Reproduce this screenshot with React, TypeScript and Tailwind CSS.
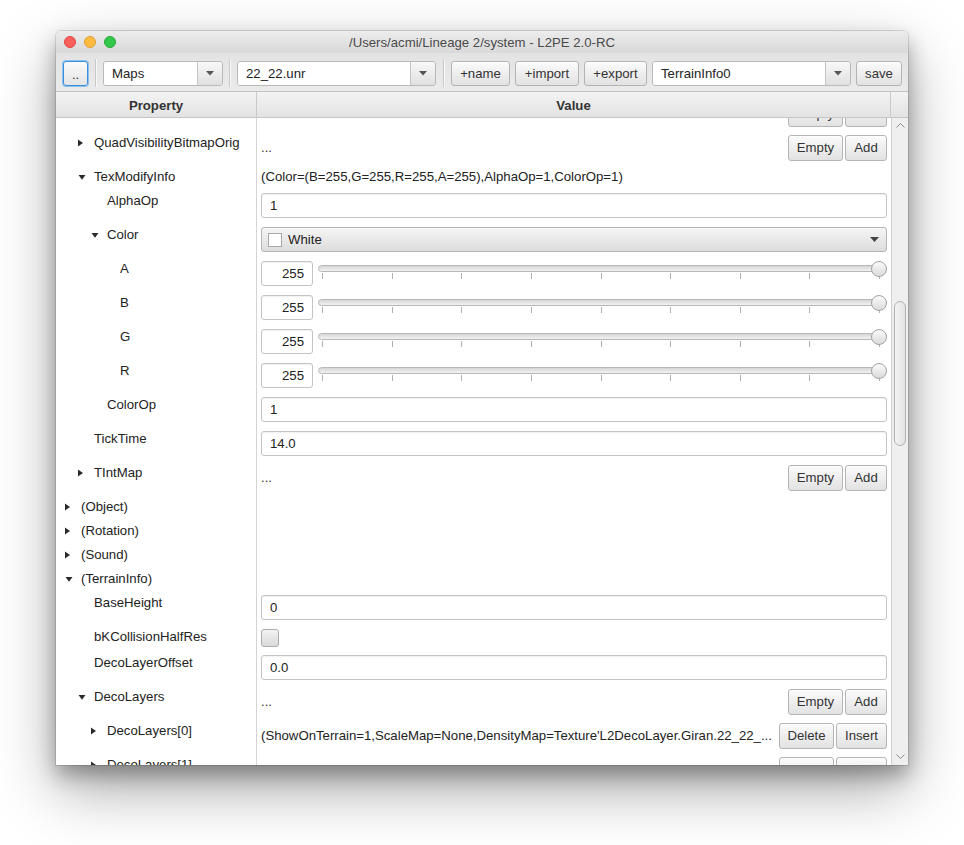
import React from 'react';

type Row = {
  label?: string;
  level: number;
  arrow?: 'right' | 'down';
  h: 24 | 26 | 34;
  value: React.ReactNode;
};

function RightTri() {
  return (
    <svg width="5" height="8" viewBox="0 0 5 8">
      <path d="M0 0.5L5 4L0 7.5Z" fill="#2a2a2a" />
    </svg>
  );
}
function DownTri() {
  return (
    <svg width="8" height="5" viewBox="0 0 8 5">
      <path d="M0.5 0H7.5L4 4.8Z" fill="#2a2a2a" />
    </svg>
  );
}

function Btn({ children, className = '' }: { children: React.ReactNode; className?: string }) {
  return (
    <div
      className={`flex items-center justify-center rounded-[3px] border border-[#b4b4b4] bg-gradient-to-b from-[#fbfbfb] to-[#e2e2e2] text-[13.2px] text-[#333] shadow-[inset_0_1px_0_rgba(255,255,255,0.9)] ${className}`}
    >
      {children}
    </div>
  );
}

function Combo({ text, className = '' }: { text: string; className?: string }) {
  return (
    <div className={`h-[25px] flex rounded-[3px] border border-[#b9b9b9] overflow-hidden ${className}`}>
      <div className="flex-1 bg-white flex items-center pl-[8px] text-[13.2px] text-[#222]">{text}</div>
      <div className="w-[25px] border-l border-[#c4c4c4] bg-gradient-to-b from-[#f8f8f8] to-[#e0e0e0] flex items-center justify-center">
        <svg width="8" height="5" viewBox="0 0 8 5">
          <path d="M0 0H8L4 4.5Z" fill="#555" />
        </svg>
      </div>
    </div>
  );
}

function Sep() {
  return <div className="w-[1px] h-[28px] -mt-[2px] bg-[#c9c9c9] shadow-[1px_0_0_#f7f7f7]" />;
}

function Dots() {
  return <span className="flex-1 text-[13.2px] text-[#333]">...</span>;
}

function EmptyAdd() {
  return (
    <div className="flex items-center h-full w-full">
      <Dots />
      <Btn className="h-[26px] w-[55px]">Empty</Btn>
      <Btn className="h-[26px] w-[42px] ml-[2px]">Add</Btn>
    </div>
  );
}

function Field({ text }: { text: string }) {
  return (
    <div className="mt-[4px] h-[25px] w-full rounded-[3px] border border-[#c4c4c4] bg-white shadow-[inset_0_1px_1px_rgba(0,0,0,0.06)] flex items-center pl-[8px] text-[13.2px] text-[#222]">
      {text}
    </div>
  );
}

function SliderRow() {
  const ticks = [0, 1, 2, 3, 4, 5, 6, 7, 8];
  return (
    <div className="mt-[4px] flex w-full">
      <div className="h-[25px] w-[52px] rounded-[3px] border border-[#c4c4c4] bg-white shadow-[inset_0_1px_1px_rgba(0,0,0,0.06)] flex items-center justify-end pr-[8px] text-[13.2px] text-[#222]">
        255
      </div>
      <div className="relative flex-1 ml-[5px] h-[25px]">
        <div className="mt-[4px] h-[7px] rounded-full border border-[#b8b8b8] bg-gradient-to-b from-[#d6d6d6] to-[#f2f2f2]" />
        <div className="mt-[1px] ml-[4px] w-[558px] flex justify-between">
          {ticks.map((t) => (
            <div key={t} className="w-[1px] h-[6px] bg-[#b0b0b0]" />
          ))}
        </div>
        <div className="absolute left-[553px] top-[0px] w-[16px] h-[16px] rounded-full border border-[#a4a4a4] bg-gradient-to-b from-[#fbfbfb] to-[#dadada]" />
      </div>
    </div>
  );
}

function ColorCombo() {
  return (
    <div className="mt-[4px] h-[25px] w-full rounded-[3px] border border-[#b4b4b4] bg-gradient-to-b from-[#f5f5f5] to-[#dddddd] flex items-center pl-[6px] pr-[7px] text-[13.2px] text-[#222]">
      <div className="w-[14px] h-[14px] bg-white border border-[#a8a8a8]" />
      <span className="ml-[6px] flex-1">White</span>
      <svg width="9" height="5" viewBox="0 0 9 5">
        <path d="M0 0H9L4.5 5Z" fill="#444" />
      </svg>
    </div>
  );
}

function CheckBox() {
  return (
    <div className="mt-[4px] w-[18px] h-[18px] rounded-[3px] border border-[#acacac] bg-gradient-to-b from-[#f3f3f3] to-[#d9d9d9]" />
  );
}

function TextVal({ text }: { text: string }) {
  return <div className="flex items-center h-full text-[13.2px] text-[#222] whitespace-nowrap">{text}</div>;
}

function LayerVal({ text, showText = true }: { text: string; showText?: boolean }) {
  return (
    <div className="flex items-center h-full w-full">
      <span className="flex-1 min-w-0 overflow-hidden whitespace-nowrap text-[13.2px] text-[#222]">{showText ? text : ''}</span>
      <Btn className="h-[26px] w-[55px] ml-[4px]">Delete</Btn>
      <Btn className="h-[26px] w-[51px] ml-[2px]">Insert</Btn>
    </div>
  );
}

const rows: Row[] = [
  { label: '', level: 1, h: 34, value: <EmptyAdd /> },
  { label: 'QuadVisibilityBitmapOrig', level: 1, arrow: 'right', h: 34, value: <EmptyAdd /> },
  {
    label: 'TexModifyInfo',
    level: 1,
    arrow: 'down',
    h: 24,
    value: <TextVal text="(Color=(B=255,G=255,R=255,A=255),AlphaOp=1,ColorOp=1)" />,
  },
  { label: 'AlphaOp', level: 2, h: 34, value: <Field text="1" /> },
  { label: 'Color', level: 2, arrow: 'down', h: 34, value: <ColorCombo /> },
  { label: 'A', level: 3, h: 34, value: <SliderRow /> },
  { label: 'B', level: 3, h: 34, value: <SliderRow /> },
  { label: 'G', level: 3, h: 34, value: <SliderRow /> },
  { label: 'R', level: 3, h: 34, value: <SliderRow /> },
  { label: 'ColorOp', level: 2, h: 34, value: <Field text="1" /> },
  { label: 'TickTime', level: 1, h: 34, value: <Field text="14.0" /> },
  { label: 'TIntMap', level: 1, arrow: 'right', h: 34, value: <EmptyAdd /> },
  { label: '(Object)', level: 0, arrow: 'right', h: 24, value: null },
  { label: '(Rotation)', level: 0, arrow: 'right', h: 24, value: null },
  { label: '(Sound)', level: 0, arrow: 'right', h: 24, value: null },
  { label: '(TerrainInfo)', level: 0, arrow: 'down', h: 24, value: null },
  { label: 'BaseHeight', level: 1, h: 34, value: <Field text="0" /> },
  { label: 'bKCollisionHalfRes', level: 1, h: 26, value: <CheckBox /> },
  { label: 'DecoLayerOffset', level: 1, h: 34, value: <Field text="0.0" /> },
  { label: 'DecoLayers', level: 1, arrow: 'down', h: 34, value: <EmptyAdd /> },
  {
    label: 'DecoLayers[0]',
    level: 2,
    arrow: 'right',
    h: 34,
    value: (
      <LayerVal text="(ShowOnTerrain=1,ScaleMap=None,DensityMap=Texture'L2DecoLayer.Giran.22_22_..." />
    ),
  },
  { label: 'DecoLayers[1]', level: 2, arrow: 'right', h: 34, value: <LayerVal text="" showText={false} /> },
];

const heightCls: Record<number, string> = { 24: 'h-[24px]', 26: 'h-[26px]', 34: 'h-[34px]' };
const padCls: Record<number, string> = { 0: 'pl-[9px]', 1: 'pl-[22px]', 2: 'pl-[35px]', 3: 'pl-[48px]' };

function TreeRow({ r }: { r: Row }) {
  return (
    <div className={`flex ${heightCls[r.h]}`}>
      <div className={`w-[201px] shrink-0 border-r border-[#d4d4d4] ${padCls[r.level]}`}>
        <div className="h-[24px] flex items-center text-[13.2px] text-[#222] whitespace-nowrap">
          <div className="w-[16px] flex items-center">
            {r.arrow === 'right' ? <RightTri /> : r.arrow === 'down' ? <DownTri /> : null}
          </div>
          <span>{r.label}</span>
        </div>
      </div>
      <div className="flex-1 min-w-0 pl-[4px] pr-[4px] flex items-start">
        {r.value}
      </div>
    </div>
  );
}

export default function App() {
  return (
    <div className="w-[964px] h-[845px] bg-white pt-[31px] pl-[56px] font-['Liberation_Sans',Arial,Helvetica,sans-serif] overflow-hidden">
      <div className="w-[852px] h-[734px] flex flex-col rounded-t-[5px] overflow-hidden bg-white shadow-[0_0_0_1px_rgba(0,0,0,0.12),0_10px_20px_rgba(0,0,0,0.3),0_24px_60px_rgba(0,0,0,0.35)]">
        {/* Title bar */}
        <div className="h-[22px] shrink-0 flex items-center bg-gradient-to-b from-[#ececec] to-[#d9d9d9]">
          <div className="w-[80px] flex items-center gap-[8px] pl-[8px]">
            <div className="w-[12px] h-[12px] rounded-full bg-[#fc605b] border border-[#de4643]" />
            <div className="w-[12px] h-[12px] rounded-full bg-[#fdbc40] border border-[#dea034]" />
            <div className="w-[12px] h-[12px] rounded-full bg-[#34c84a] border border-[#27a837]" />
          </div>
          <div className="flex-1 pt-[2px] text-center text-[13.2px] text-[#4a4a4a] whitespace-nowrap">
            /Users/acmi/Lineage 2/system - L2PE 2.0-RC
          </div>
          <div className="w-[80px]" />
        </div>

        {/* Toolbar */}
        <div className="h-[39px] shrink-0 flex items-start pt-[8px] pl-[7px] bg-gradient-to-b from-[#e3e3e3] to-[#ebebeb] border-b border-[#c2c2c2]">
          <div className="h-[25px] w-[25px] rounded-[3px] border border-[#3a8fdc] shadow-[0_0_0_1px_#8cc0ee] bg-gradient-to-b from-[#fafafa] to-[#e4e4e4] flex items-end justify-center pb-[4px] text-[13px] leading-[13px] text-[#333]">
            ..
          </div>
          <div className="ml-[7px] h-[25px] flex items-center"><Sep /></div>
          <Combo text="Maps" className="ml-[7px] w-[120px]" />
          <div className="ml-[6px] h-[25px] flex items-center"><Sep /></div>
          <Combo text="22_22.unr" className="ml-[7px] w-[199px]" />
          <div className="ml-[7px] h-[25px] flex items-center"><Sep /></div>
          <Btn className="ml-[7px] h-[25px] w-[59px]">+name</Btn>
          <Btn className="ml-[5px] h-[25px] w-[64px]">+import</Btn>
          <Btn className="ml-[5px] h-[25px] w-[63px]">+export</Btn>
          <Combo text="TerrainInfo0" className="ml-[5px] w-[199px]" />
          <Btn className="ml-[5px] h-[25px] w-[46px]">save</Btn>
        </div>

        {/* Header */}
        <div className="h-[26px] shrink-0 flex bg-gradient-to-b from-[#f3f3f3] to-[#e3e3e3] border-b border-[#c6c6c6] text-[13.2px] font-bold text-[#333]">
          <div className="w-[201px] pt-[2px] border-r border-[#c9c9c9] flex items-center justify-center">Property</div>
          <div className="w-[634px] pt-[2px] border-r border-[#c9c9c9] flex items-center justify-center">Value</div>
          <div className="flex-1" />
        </div>

        {/* Body */}
        <div className="flex-1 min-h-0 flex overflow-hidden">
          <div className="flex-1 min-w-0 overflow-hidden">
            <div className="-mt-[21px]">
              {rows.map((r, i) => (
                <TreeRow key={i} r={r} />
              ))}
            </div>
          </div>
          <div className="w-[17px] shrink-0 border-l border-[#d0d0d0] bg-[#efefef] flex flex-col items-center">
            <svg className="mt-[4px]" width="9" height="6" viewBox="0 0 9 6">
              <path d="M0.5 5.5L4.5 1.5L8.5 5.5" fill="none" stroke="#8a8a8a" strokeWidth="1" />
            </svg>
            <div className="mt-[173px] w-[12px] h-[145px] rounded-[6px] border border-[#b2b2b2] bg-gradient-to-r from-[#f4f4f4] to-[#e2e2e2]" />
            <div className="flex-1" />
            <svg className="mb-[5px]" width="9" height="6" viewBox="0 0 9 6">
              <path d="M0.5 0.5L4.5 4.5L8.5 0.5" fill="none" stroke="#8a8a8a" strokeWidth="1" />
            </svg>
          </div>
        </div>
      </div>
    </div>
  );
}
